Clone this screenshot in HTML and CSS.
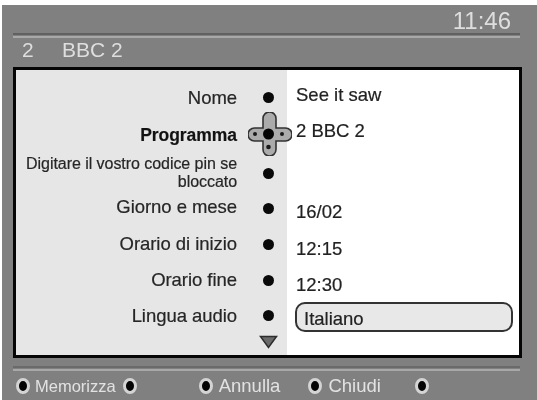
FILE: index.html
```html
<!DOCTYPE html>
<html lang="it">
<head>
<meta charset="utf-8">
<title>BBC 2</title>
<link rel="stylesheet" href="styles.css">
</head>
<body>
<div class="screen">
  <header class="top">
    <div class="clock">11:46</div>
    <div class="rule"></div>
    <div class="channel"><span class="num">2</span><span>BBC 2</span></div>
  </header>
  <main class="panel">
    <div class="row">
      <div class="label">Nome</div><div class="dotcell"><span class="dot"></span></div><div class="value up">See it saw</div>
    </div>
    <div class="row">
      <div class="label bold">Programma</div>
      <div class="dotcell">
        <svg class="cursor" width="44" height="44" viewBox="0 0 44 44" aria-hidden="true">
          <path d="M15 6.500 a6.500 6.500 0 0 1 13 0 V16 H37.500 a6.500 6.500 0 0 1 0 13 H28 V37.500 a6.500 6.500 0 0 1 -13 0 V29 H6.500 a6.500 6.500 0 0 1 0 -13 H15 Z" fill="#ababab" stroke="#333" stroke-width="1.600"/>
          <circle cx="20.500" cy="22" r="5.500" fill="#050505"/>
          <circle cx="20.500" cy="35" r="2.300" fill="#1a1a1a"/>
          <circle cx="7" cy="22" r="2" fill="#1a1a1a"/>
          <circle cx="34" cy="22" r="2" fill="#1a1a1a"/>
        </svg>
      </div>
      <div class="value up more">2 BBC 2</div>
    </div>
    <div class="row">
      <div class="label small">Digitare il vostro codice pin se bloccato</div><div class="dotcell low"><span class="dot"></span></div><div class="value"></div>
    </div>
    <div class="row">
      <div class="label">Giorno e mese</div><div class="dotcell low"><span class="dot"></span></div><div class="value down">16/02</div>
    </div>
    <div class="row">
      <div class="label">Orario di inizio</div><div class="dotcell low"><span class="dot"></span></div><div class="value down">12:15</div>
    </div>
    <div class="row">
      <div class="label">Orario fine</div><div class="dotcell low"><span class="dot"></span></div><div class="value down">12:30</div>
    </div>
    <div class="row">
      <div class="label">Lingua audio</div><div class="dotcell"><span class="dot"></span></div><div class="value fieldcell"><span class="field">Italiano</span></div>
    </div>
    <div class="row arrowrow">
      <div class="label"></div>
      <div class="dotcell">
        <svg width="19" height="14" viewBox="0 0 19 14" aria-hidden="true"><path d="M1.500 1.500 H17.500 L9.500 12.500 Z" fill="#6a6a6a" stroke="#2c2c2c" stroke-width="1.500"/></svg>
      </div>
      <div class="value"></div>
    </div>
  </main>
  <div class="rule lower"></div>
  <footer class="bottom">
    <span class="btn"></span><span class="foottext memo">Memorizza</span><span class="btn b2"></span>
    <span class="btn b3"></span><span class="foottext">Annulla</span>
    <span class="btn b4"></span><span class="foottext">Chiudi</span>
    <span class="btn b5"></span>
  </footer>
</div>
</body>
</html>
```
FILE: styles.css
```css
* { box-sizing: border-box; }
html, body { margin: 0; background: #fff; }
body { width: 537px; height: 400px; padding: 5px 0 0 2px; overflow: hidden; font-family: "Liberation Sans", Arial, sans-serif; }
.screen { width: 535px; height: 395px; background: #808080; padding: 0 0 0 11px; display: flex; flex-direction: column; filter: blur(0.6px); }
.top { height: 63px; display: flex; flex-direction: column; color: #dedede; width: 507px; }
.clock { height: 28px; padding: 4px 9px 0 0; text-align: right; font-size: 24px; line-height: 24px; }
.rule { height: 5px; flex: none; width: 507px; background: linear-gradient(#606060 0 40%, #808080 40% 60%, #a8a8a8 60% 100%); }
.channel { font-size: 21px; line-height: 22px; padding: 1px 0 0 9px; display: flex; }
.num { width: 40px; }
.panel { width: 509px; height: 291px; flex: none; border: 3px solid #050505; background: linear-gradient(90deg, #e6e6e6 0 271px, #fff 271px); padding-top: 9px; color: #262626; }
.row { display: grid; grid-template-columns: 221px 50px 1fr; height: 36.300px; align-items: center; }
.label { text-align: right; font-size: 18.500px; line-height: 20px; padding-top: 2px; letter-spacing: -0.050px; -webkit-text-stroke: 0.2px #262626; }
.bold { font-size: 17.500px; font-weight: 700; color: #111; }
.small { font-size: 16px; line-height: 18px; padding-top: 3px; }
.dotcell { position: relative; display: flex; justify-content: center; align-items: center; height: 100%; padding-left: 12px; }
.low { padding-top: 4px; }
.dot { width: 11px; height: 11px; border-radius: 50%; background: #0a0a0a; }
.cursor { position: absolute; left: 11px; top: -4px; }
.value { font-size: 18.500px; line-height: 20px; padding-left: 9px; color: #222; -webkit-text-stroke: 0.2px #222; }
.up { padding-bottom: 4px; }
.more { padding-bottom: 6px; }
.down { padding-top: 12px; }
.fieldcell { padding-top: 4px; padding-left: 8px; }
.field { display: block; width: 218px; height: 30px; border: 2px solid #333; border-radius: 10px; background: #e8e8e8; padding: 5px 0 0 7px; line-height: 20px; }
.arrowrow { height: 18px; }
.lower { margin-top: 8px; background: linear-gradient(#6a6a6a 0 40%, #808080 40% 60%, #a8a8a8 60% 100%); }
.bottom { display: flex; align-items: center; height: 29px; color: #e2e2e2; font-size: 18.500px; padding-left: 3px; }
.btn { width: 14px; height: 16px; border-radius: 50%; background: #050505; border: 3px solid #d4d4d4; flex: none; }
.foottext { margin-left: 6px; line-height: 20px; }
.memo { margin-left: 5px; font-size: 16.500px; }
.b2 { margin-left: 7px; }
.b3 { margin-left: 62px; }
.b4 { margin-left: 28px; }
.b5 { margin-left: 34px; }
```
